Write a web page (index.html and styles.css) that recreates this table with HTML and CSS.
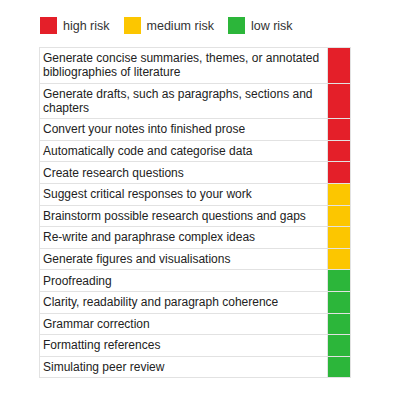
FILE: index.html
```html
<!DOCTYPE html>
<html>
<head>
<meta charset="utf-8">
<link rel="stylesheet" href="styles.css">
</head>
<body>
<div class="page">
  <div class="legend">
    <div class="legend-item"><span class="swatch red"></span><span>high risk</span></div>
    <div class="legend-item"><span class="swatch yellow"></span><span>medium risk</span></div>
    <div class="legend-item"><span class="swatch green"></span><span>low risk</span></div>
  </div>
  <table class="risk-table">
    <tr><td class="task">Generate concise summaries, themes, or annotated bibliographies of literature</td><td class="level red"></td></tr>
    <tr><td class="task">Generate drafts, such as paragraphs, sections and chapters</td><td class="level red"></td></tr>
    <tr><td class="task">Convert your notes into finished prose</td><td class="level red"></td></tr>
    <tr><td class="task">Automatically code and categorise data</td><td class="level red"></td></tr>
    <tr><td class="task">Create research questions</td><td class="level red"></td></tr>
    <tr><td class="task">Suggest critical responses to your work</td><td class="level yellow"></td></tr>
    <tr><td class="task">Brainstorm possible research questions and gaps</td><td class="level yellow"></td></tr>
    <tr><td class="task">Re-write and paraphrase complex ideas</td><td class="level yellow"></td></tr>
    <tr><td class="task">Generate figures and visualisations</td><td class="level yellow"></td></tr>
    <tr><td class="task">Proofreading</td><td class="level green"></td></tr>
    <tr><td class="task">Clarity, readability and paragraph coherence</td><td class="level green"></td></tr>
    <tr><td class="task">Grammar correction</td><td class="level green"></td></tr>
    <tr><td class="task">Formatting references</td><td class="level green"></td></tr>
    <tr><td class="task">Simulating peer review</td><td class="level green"></td></tr>
  </table>
</div>
</body>
</html>
```
FILE: styles.css
```css
html, body {
  margin: 0;
  padding: 0;
  background: #ffffff;
}
.page {
  padding: 17px 0 0 39px;
  font-family: "Liberation Sans", Arial, sans-serif;
  color: #222222;
}
.legend {
  display: flex;
  align-items: center;
  padding-left: 1px;
  font-size: 12.5px;
  color: #333333;
}
.legend-item {
  display: flex;
  align-items: center;
  gap: 6px;
  margin-right: 14px;
}
.swatch {
  display: block;
  width: 17px;
  height: 17px;
}
.red { background: #e41f29; }
.yellow { background: #fcc600; }
.green { background: #2cb63a; }
.risk-table {
  margin-top: 13px;
  width: 312px;
  border-collapse: collapse;
  font-size: 12px;
}
.risk-table td {
  border: 1px solid #e2e2e2;
  padding: 3.3px 3px 3.3px 3px;
  line-height: 14px;
  vertical-align: top;
}
.risk-table td.level {
  width: 22px;
  padding: 0;
}
```
